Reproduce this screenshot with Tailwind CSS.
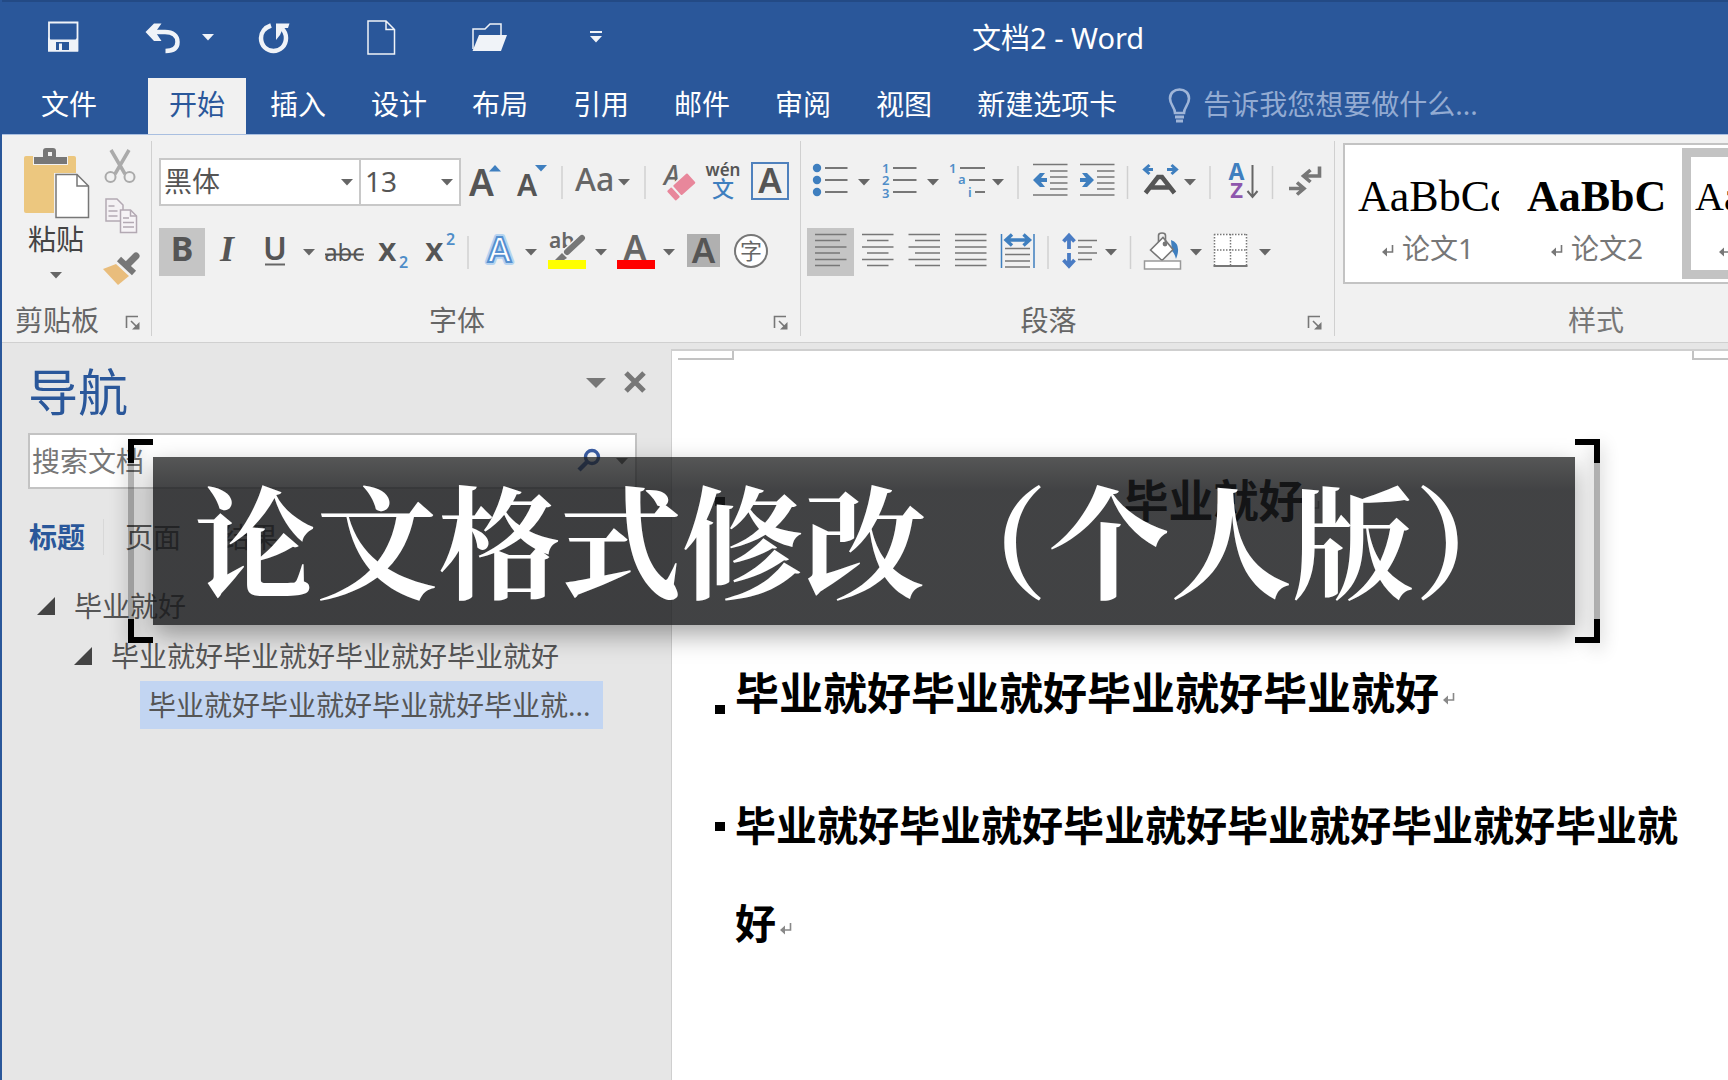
<!DOCTYPE html>
<html lang="zh-CN">
<head>
<meta charset="utf-8">
<meta name="viewport" content="width=device-width, initial-scale=1">
<title>文档2 - Word</title>
<script src="https://cdn.jsdelivr.net/npm/@tailwindcss/browser@4"></script>
</head>
<body class="font-['Noto_Sans','Noto_Sans_CJK_SC',sans-serif] text-[28px] leading-9 text-[#555] bg-[#e6e6e6] [&_svg]:overflow-visible">
<svg width="0" height="0" class="absolute" aria-hidden="true">
  <defs>
    <symbol id="caret" viewBox="0 0 12 7"><path d="M0 0h12L6 6.5z" fill="#666"/></symbol>
    <symbol id="launcher" viewBox="0 0 16 16"><path d="M1.5 13V1.5H13M6 6l7 7" fill="none" stroke="#777" stroke-width="1.6"/><path d="M14.5 7v7.500H7z" fill="#777"/></symbol>
    <symbol id="ret" viewBox="0 0 12 16"><path d="M10.500 3v7H3" fill="none" stroke="currentColor" stroke-width="1.600"/><path d="M0 10l5-4.500v9z" fill="currentColor"/></symbol>
  </defs>
</svg>
<div class="relative flex min-h-screen w-full flex-col overflow-hidden border-l-2 border-[#2a579a]">

  <!-- Title bar -->
  <header class="bg-[#2a579a] text-white">
    <div class="relative flex h-[78px] items-stretch border-t-2 border-[#234a85]">
      <button aria-label="保存" class="flex-none"><svg width="118" height="76" viewBox="2 2 118 76"><path d="M49 22.500h28.500v28H49z" fill="none" stroke="#f0f3f8" stroke-width="1.800"/><path d="M48 37l2.500 2.500h25L78 37v14.500H48z" fill="#f0f3f8"/><path d="M56 42h13v8H56z" fill="#2a579a"/><path d="M59 43.500h3v6.500h-3z" fill="#f0f3f8"/></svg></button>
      <button aria-label="撤消" class="flex-none"><svg width="120" height="76" viewBox="120 2 120 76"><path d="M150 32h15c8 0 12.500 4 12.500 10 0 6-4.500 9-12 9" fill="none" stroke="#f0f3f8" stroke-width="4.500"/><path d="M145.500 32L154 23.500h7.500l-6 8.500 6 9H154z" fill="#f0f3f8"/><path d="M202 34h12l-6 6.500z" fill="#f0f3f8"/></svg></button>
      <button aria-label="重复" class="flex-none"><svg width="90" height="76" viewBox="240 2 90 76"><path d="M271 25.500c-6 2-10 7-10 12.500 0 8 6 13 12.500 13S286 46 286 38c0-4-1.500-7-4-9.500" fill="none" stroke="#f0f3f8" stroke-width="4.500"/><path d="M276 23.500h13.500l-1.500 4.500-5 0-3 7-4 5z" fill="#f0f3f8"/></svg></button>
      <button aria-label="新建" class="flex-none"><svg width="110" height="76" viewBox="330 2 110 76"><path d="M368 21h18l8.500 8.500V54H368zM386 21v8.500h8.500" fill="none" stroke="#f0f3f8" stroke-width="1.500"/></svg></button>
      <button aria-label="打开" class="flex-none"><svg width="110" height="76" viewBox="440 2 110 76"><path d="M473 49V29h12l5-5h11v11" fill="none" stroke="#f0f3f8" stroke-width="1.500"/><path d="M479 35h28l-6 16h-28.500z" fill="#f0f3f8"/></svg></button>
      <button aria-label="自定义快速访问工具栏" class="flex-none"><svg width="90" height="76" viewBox="550 2 90 76"><path d="M590 31h12v2h-12zM590 36h12l-6 6.500z" fill="#f0f3f8"/></svg></button>
      <h1 class="ml-[332px] self-center whitespace-nowrap pb-1 text-[29px]">文档2 - Word</h1>
    </div>
    <nav class="flex h-14 items-center gap-[3px] whitespace-nowrap" aria-label="功能区选项卡">
      <button class="mr-[27px] h-full w-[116px] pb-1 pl-[39px] text-left">文件</button>
      <button class="h-full bg-[#f1f1f1] px-[21px] pb-1 text-[#2a579a]">开始</button>
      <button class="h-full px-[21px] pb-1">插入</button>
      <button class="h-full px-[21px] pb-1">设计</button>
      <button class="h-full px-[21px] pb-1">布局</button>
      <button class="h-full px-[21px] pb-1">引用</button>
      <button class="h-full px-[21px] pb-1">邮件</button>
      <button class="h-full px-[21px] pb-1">审阅</button>
      <button class="h-full px-[21px] pb-1">视图</button>
      <button class="h-full px-[21px] pb-1">新建选项卡</button>
      <label class="flex h-full min-w-0 flex-1 items-center pl-[26px]">
        <svg class="flex-none" width="36" height="38" viewBox="0 0 36 38" fill="none" stroke="#9fb5d8" stroke-width="2.600"><path d="M8 26c0-6-5-8-5-14.500C3 6 7 2.500 12.500 2.500S22 6 22 11.500C22 18 17 20 17 26z"/><path d="M8 30h9M9 34h7" stroke-width="3"/></svg>
        <input aria-label="操作说明搜索" class="w-full bg-transparent pb-1 outline-none placeholder:text-[#93abd2]" placeholder="告诉我您想要做什么...">
      </label>
    </nav>
  </header>

  <!-- Ribbon -->
  <section class="flex h-[209px] flex-none border-y border-t-[#a9bfe0] border-b-[#d0d0d0] bg-[#f1f1f1]" aria-label="开始">
    <div class="flex w-[149px] flex-none flex-col">
      <div class="flex h-[167px]">
        <button class="flex w-24 flex-col items-center pl-3 pt-3 text-[#444]">
          <svg width="68" height="72" viewBox="24 147 68 72"><rect x="26" y="156" width="52" height="57" rx="2" fill="#ecc77f"/><path d="M35 155h35v10H35z" fill="#f1f1f1"/><path d="M36 164v-7h9v-6q0-3 3-3h7q3 0 3 3v6h11v7z" fill="#777"/><path d="M50 152h4v4h-4z" fill="#f1f1f1"/><path d="M56 173h24v46H56z" fill="#f1f1f1"/><path d="M58 174.500h21l11.500 11.500v31.500H58z" fill="#fff" stroke="#777" stroke-width="1.500"/><path d="M79 174.500V186h11.500" fill="none" stroke="#777" stroke-width="1.500"/></svg>
          <span class="pt-[2px]">粘贴</span>
          <svg class="mt-[15px] flex-none" width="12" height="7"><use href="#caret"/></svg>
        </button>
        <div class="flex flex-col pt-2">
          <button aria-label="剪切"><svg width="50" height="48" viewBox="98 142 50 48" fill="none" stroke="#aaa"><path d="M111 149l14 24M129 149l-14 24" stroke-width="3.500"/><circle cx="110.500" cy="176" r="5" stroke-width="2"/><circle cx="129.500" cy="176" r="5" stroke-width="2"/></svg></button>
          <button aria-label="复制"><svg width="50" height="50" viewBox="98 192 50 50" stroke="#b3a9b3" stroke-width="1.500"><path d="M106 200h11l6 6v16h-17z" fill="#f4f1f4"/><path d="M108.500 207h6M108.500 212h9M108.500 217h9" /><path d="M120.500 211h10l6 6v16.500h-16z" fill="#f6f3f6"/><path d="M130.500 211v6h6M123 219h6M123 223.500h11M123 228h11" fill="none"/></svg></button>
          <button aria-label="格式刷"><svg width="50" height="50" viewBox="98 240 50 50"><path d="M103 268l13-5 13 12-11 9z" fill="#e9bd7c"/><path d="M119 258l15 14" stroke="#777" stroke-width="6"/><path d="M127 264l9-9" stroke="#777" stroke-width="7" stroke-linecap="round"/><path d="M114 260l17 16" stroke="#f1f1f1" stroke-width="1"/></svg></button>
        </div>
      </div>
      <div class="flex items-center pl-[13px] text-[#666]"><span class="flex-1">剪贴板</span><button aria-label="剪贴板选项" class="pr-[10px] pt-[6px]"><svg width="16" height="16"><use href="#launcher"/></svg></button></div>
    </div>

    <div class="my-[6px] w-px flex-none bg-[#d0d0d0]"></div>

    <div class="flex w-[648px] flex-none flex-col pt-[23px]">
      <div class="flex h-12 pl-[7px]">
        <div class="relative h-12 w-[202px] flex-none">
          <select aria-label="字体" class="h-12 w-full appearance-none border-2 border-[#c8c8c8] bg-white pb-[2px] pl-[3px] text-[#555]"><option>黑体</option></select>
          <svg class="pointer-events-none absolute right-2 top-[21px]" width="12" height="7"><use href="#caret"/></svg>
        </div>
        <div class="relative h-12 w-[100px] flex-none">
          <select aria-label="字号" class="h-12 w-full appearance-none border-2 border-l-0 border-[#c8c8c8] bg-white pb-[2px] pl-[4px] text-[#555]"><option>13</option></select>
          <svg class="pointer-events-none absolute right-2 top-[21px]" width="12" height="7"><use href="#caret"/></svg>
        </div>
        <button aria-label="增大字号"><svg width="47" height="48" viewBox="461 158 47 48"><text x="469" y="196" font-size="37" font-weight="600" fill="#555">A</text><path d="M489 171.500h12l-6-6.500z" fill="#3f7fbf"/></svg></button>
        <button aria-label="减小字号"><svg width="48" height="48" viewBox="508 158 48 48"><text x="517" y="196" font-size="30" font-weight="600" fill="#555">A</text><path d="M535 165h12l-6 6.500z" fill="#3f7fbf"/></svg></button>
        <button aria-label="更改大小写"><svg width="82" height="48" viewBox="556 158 82 48"><path d="M562 166v33" stroke="#d0d0d0" stroke-width="1.500"/><text x="575" y="191" font-size="32" font-weight="500" fill="#666">Aa</text><use href="#caret" x="618" y="179" width="12" height="7"/></svg></button>
        <button aria-label="清除所有格式"><svg width="65" height="48" viewBox="638 158 65 48"><path d="M645 166v33" stroke="#d0d0d0" stroke-width="1.500"/><text x="664" y="185" font-size="27" font-weight="500" font-style="italic" fill="#666">A</text><path d="M670 189l17-16" stroke="#f1f1f1" stroke-width="4"/><g transform="rotate(-42 682 187)"><rect x="676" y="180" width="19" height="13" rx="1" fill="#e8879b"/><rect x="668" y="180" width="6" height="13" rx="1" fill="#e8879b"/></g></svg></button>
        <button aria-label="拼音指南"><svg width="43" height="48" viewBox="703 158 43 48"><text x="723" y="176" text-anchor="middle" font-size="17" font-weight="600" fill="#555">wén</text><text x="723" y="197" text-anchor="middle" font-size="22" font-weight="500" fill="#3f7fbf">文</text></svg></button>
        <button aria-label="字符边框"><svg width="50" height="48" viewBox="746 158 50 48"><rect x="752" y="163" width="36" height="36" fill="none" stroke="#4f81bd" stroke-width="2"/><text x="770" y="193" text-anchor="middle" font-size="35" font-weight="600" fill="#555">A</text></svg></button>
      </div>
      <div class="mt-[22px] flex h-12 pl-[7px]">
        <button aria-label="加粗" class="bg-[#c5c5c5]"><svg width="46" height="48" viewBox="159 228 46 48"><text x="182" y="261" text-anchor="middle" font-size="34" font-weight="700" fill="#555">B</text></svg></button>
        <button aria-label="倾斜"><svg width="45" height="48" viewBox="205 228 45 48"><text x="227" y="261" text-anchor="middle" font-size="36" font-weight="700" font-style="italic" font-family="Liberation Serif" fill="#555">I</text></svg></button>
        <button aria-label="下划线"><svg width="70" height="48" viewBox="250 228 70 48"><text x="275" y="260" text-anchor="middle" font-size="32" font-weight="600" fill="#555">U</text><path d="M265 264.500h20" stroke="#666" stroke-width="2"/><use href="#caret" x="303" y="249" width="12" height="7"/></svg></button>
        <button aria-label="删除线"><svg width="50" height="48" viewBox="320 228 50 48"><text x="344" y="261" text-anchor="middle" font-size="24" fill="#555">abc</text><path d="M325 254.500h39" stroke="#555" stroke-width="1.800"/></svg></button>
        <button aria-label="下标"><svg width="48" height="48" viewBox="370 228 48 48"><text x="378" y="261" font-size="33" font-weight="600" fill="#555">x</text><text x="399" y="268" font-size="16" font-weight="600" fill="#4f8dc8">2</text></svg></button>
        <button aria-label="上标"><svg width="45" height="48" viewBox="418 228 45 48"><text x="425" y="261" font-size="33" font-weight="600" fill="#555">x</text><text x="446" y="245" font-size="16" font-weight="600" fill="#4f8dc8">2</text></svg></button>
        <button aria-label="文本效果"><svg width="79" height="48" viewBox="463 228 79 48"><path d="M468 236v33" stroke="#d0d0d0" stroke-width="1.500"/><text x="499.500" y="262" text-anchor="middle" font-size="35" font-weight="600" fill="#4f8fd0" stroke="#b5d3f0" stroke-width="6" stroke-linejoin="round">A</text><text x="499.500" y="262" text-anchor="middle" font-size="35" font-weight="600" fill="#fff" stroke="#5590d0" stroke-width="2">A</text><use href="#caret" x="525" y="249" width="12" height="7"/></svg></button>
        <button aria-label="突出显示"><svg width="69" height="48" viewBox="542 228 69 48"><text x="549" y="248" font-size="21" font-weight="600" fill="#666">ab</text><path d="M566 253l17-16" stroke="#f1f1f1" stroke-width="9"/><path d="M567 252l15-14" stroke="#777" stroke-width="6" stroke-linecap="round"/><path d="M555 260l7-7 5 5-3 2z" fill="#777"/><path d="M548 260h38v9h-38z" fill="#ff0"/><use href="#caret" x="595" y="249" width="12" height="7"/></svg></button>
        <button aria-label="字体颜色"><svg width="69" height="48" viewBox="611 228 69 48"><text x="635" y="260" text-anchor="middle" font-size="34" font-weight="600" fill="#666">A</text><path d="M617 260h38v9h-38z" fill="#f00"/><use href="#caret" x="663" y="249" width="12" height="7"/></svg></button>
        <button aria-label="字符底纹"><svg width="47" height="48" viewBox="680 228 47 48"><path d="M687 234h33v33h-33z" fill="#b0b0b0"/><text x="703.500" y="263" text-anchor="middle" font-size="35" font-weight="600" fill="#555">A</text></svg></button>
        <button aria-label="带圈字符"><svg width="47" height="48" viewBox="727 228 47 48"><circle cx="751" cy="251" r="16" fill="#fff" stroke="#777" stroke-width="2"/><text x="751" y="259" text-anchor="middle" font-size="22" fill="#666">字</text></svg></button>
      </div>
      <div class="mt-[26px] flex items-center text-[#666]"><span class="flex-1 text-center">字体</span><button aria-label="字体选项" class="w-[38px] pt-[6px]"><svg class="ml-[11px]" width="16" height="16"><use href="#launcher"/></svg></button></div>
    </div>

    <div class="my-[6px] w-px flex-none bg-[#d0d0d0]"></div>

    <div class="flex w-[533px] flex-none flex-col pt-[23px]">
      <div class="flex h-12 pl-[6px]">
        <button aria-label="项目符号"><svg width="68" height="48" viewBox="807 158 68 48"><g fill="#3f7fbf"><circle cx="817" cy="168" r="4.200"/><circle cx="817" cy="180" r="4.200"/><circle cx="817" cy="192" r="4.200"/></g><path d="M825 168h22.500M825 180h22.500M825 192h22.500" stroke="#777" stroke-width="1.800"/><use href="#caret" x="858" y="179" width="12" height="7"/></svg></button>
        <button aria-label="编号"><svg width="69" height="48" viewBox="875 158 69 48"><g fill="#4f8dc8" font-size="13" font-weight="600"><text x="882" y="173">1</text><text x="882" y="185">2</text><text x="882" y="198">3</text></g><path d="M893 168h23.500M893 180h23.500M893 192h23.500" stroke="#777" stroke-width="1.800"/><use href="#caret" x="927" y="179" width="12" height="7"/></svg></button>
        <button aria-label="多级列表"><svg width="68" height="48" viewBox="944 158 68 48"><g fill="#4f8dc8" font-size="13" font-weight="600"><text x="949" y="173">1</text><text x="958" y="184">a</text><text x="968" y="197">i</text></g><path d="M960 168h25M969 180h16M975 192h10" stroke="#777" stroke-width="1.800"/><use href="#caret" x="992" y="179" width="12" height="7"/></svg></button>
        <button aria-label="减少缩进量"><svg width="61" height="48" viewBox="1012 158 61 48"><path d="M1018 166v33" stroke="#d0d0d0" stroke-width="1.500"/><path d="M1033 164.500h34.500M1050 171h17.500M1050 177h17.500M1050 183h17.500M1050 189h17.500M1033 195h34.500" stroke="#777" stroke-width="1.600"/><path d="M1033 180l7-7h5l-4 5h6v4h-6l4 5h-5z" fill="#3f7fbf"/></svg></button>
        <button aria-label="增加缩进量"><svg width="48" height="48" viewBox="1073 158 48 48"><path d="M1080 164.500h34.500M1097 171h17.500M1097 177h17.500M1097 183h17.500M1097 189h17.500M1080 195h34.500" stroke="#777" stroke-width="1.600"/><path d="M1094 180l-7-7h-5l4 5h-6v4h6l-4 5h5z" fill="#3f7fbf"/></svg></button>
        <button aria-label="中文版式"><svg width="82" height="48" viewBox="1121 158 82 48"><path d="M1127.500 166v33" stroke="#d0d0d0" stroke-width="1.500"/><path d="M1145.500 193l12.500-16h4l12.500 16M1151 187.500h19" fill="none" stroke="#555" stroke-width="4.500"/><g fill="none" stroke="#3f7fbf" stroke-width="3"><path d="M1153 169.500h-9M1149.500 165l-5 4.500 5 4.500M1167 169.500h9M1171.500 165l5 4.500-5 4.500"/></g><use href="#caret" x="1184" y="179" width="12" height="7"/></svg></button>
        <button aria-label="排序"><svg width="63" height="48" viewBox="1203 158 63 48"><path d="M1210 166v33" stroke="#d0d0d0" stroke-width="1.500"/><text x="1236.500" y="180" text-anchor="middle" font-size="23" font-weight="700" fill="#3f7fbf">A</text><text x="1236.500" y="198" text-anchor="middle" font-size="22" font-weight="700" fill="#8e57ad">Z</text><path d="M1252.500 165v32M1247.500 191l5 6 5-6" fill="none" stroke="#666" stroke-width="2"/></svg></button>
        <button aria-label="显示编辑标记"><svg width="62" height="48" viewBox="1266 158 62 48"><path d="M1272.500 166v33" stroke="#d0d0d0" stroke-width="1.500"/><path d="M1319.500 166.500v9.500h-15M1310.500 170l-7 6 7 6M1289 188.500h14M1297 182.500l7 6-7 6" fill="none" stroke="#777" stroke-width="3.600"/></svg></button>
      </div>
      <div class="mt-[22px] flex h-12 pl-[6px]">
        <button aria-label="左对齐" class="bg-[#c5c5c5]"><svg width="47" height="48" viewBox="807 228 47 48"><path d="M815 234.500h31.500M815 240.500h25M815 247h31.500M815 253h25M815 259.500h31.500M815 265.500h25" stroke="#777" stroke-width="1.700"/></svg></button>
        <button aria-label="居中"><svg width="47" height="48" viewBox="854 228 47 48"><path d="M862 234.500h31.500M867 240.500h21.500M862 247h31.500M867 253h21.500M862 259.500h31.500M867 265.500h21.500" stroke="#777" stroke-width="1.700"/></svg></button>
        <button aria-label="右对齐"><svg width="47" height="48" viewBox="901 228 47 48"><path d="M908.500 234.500H940M915 240.500h25M908.500 247H940M915 253h25M908.500 259.500H940M915 265.500h25" stroke="#777" stroke-width="1.700"/></svg></button>
        <button aria-label="两端对齐"><svg width="46" height="48" viewBox="948 228 46 48"><path d="M955 234.500h31.500M955 240.500h31.500M955 247h31.500M955 253h31.500M955 259.500h31.500M955 265.500h31.500" stroke="#777" stroke-width="1.700"/></svg></button>
        <button aria-label="分散对齐"><svg width="48" height="48" viewBox="994 228 48 48"><path d="M1005 248.500h25M1005 254.500h25M1005 261h25M1005 267h25" stroke="#777" stroke-width="1.700"/><path d="M1001.500 234v34M1034 234v34" stroke="#3f7fbf" stroke-width="1.500"/><path d="M1006 240h23M1012 234.500l-6 5.500 6 5.500M1023.500 234.500l6 5.500-6 5.500" fill="none" stroke="#3f7fbf" stroke-width="3.400"/></svg></button>
        <button aria-label="行和段落间距"><svg width="82" height="48" viewBox="1042 228 82 48"><path d="M1048 236v33" stroke="#d0d0d0" stroke-width="1.500"/><path d="M1078 240.500h19M1078 247h14M1078 253h19M1078 259.500h14" stroke="#777" stroke-width="1.700"/><path d="M1069 249v-13M1063.500 241.500l5.500-6 5.500 6M1069 253v13M1063.500 260l5.500 6 5.500-6" fill="none" stroke="#4a7cc4" stroke-width="3.800"/><use href="#caret" x="1105" y="249" width="12" height="7"/></svg></button>
        <button aria-label="底纹"><svg width="83" height="48" viewBox="1124 228 83 48"><path d="M1130.500 236v33" stroke="#d0d0d0" stroke-width="1.500"/><path d="M1171 240q11 4 5 19-1.500-6-4-8z" fill="#3f7fbf"/><path d="M1150.500 250L1163 237.500l10 12-11 11z" fill="#fff" stroke="#777" stroke-width="1.600"/><path d="M1158.500 242v-6.500q0-2.500 3.500-2.500t3.500 2.500v9" fill="none" stroke="#777" stroke-width="1.600"/><circle cx="1165" cy="244" r="2.400" fill="#777"/><rect x="1144.500" y="261" width="36" height="8" fill="#fff" stroke="#999" stroke-width="1.500"/><use href="#caret" x="1190" y="249" width="12" height="7"/></svg></button>
        <button aria-label="边框"><svg width="72" height="48" viewBox="1207 228 72 48"><path d="M1214 234h33v32h-33z" fill="#fff"/><path d="M1214 234.500h33M1214 250h33M1214.500 234v32M1230.500 234v32M1246.500 234v32" stroke="#777" stroke-width="1.500" stroke-dasharray="1.500 1.500"/><path d="M1213.500 266h34" stroke="#777" stroke-width="1.800"/><use href="#caret" x="1259" y="249" width="12" height="7"/></svg></button>
      </div>
      <div class="mt-[26px] flex items-center text-[#666]"><span class="flex-1 text-center">段落</span><button aria-label="段落选项" class="w-[38px] pt-[6px]"><svg class="ml-[11px]" width="16" height="16"><use href="#launcher"/></svg></button></div>
    </div>

    <div class="my-[6px] w-px flex-none bg-[#d0d0d0]"></div>

    <div class="flex w-[522px] flex-none flex-col pl-2 pt-2">
      <div class="flex h-[141px] border-2 border-[#c3c3c3] bg-white pt-[3px] text-[#777]">
        <button class="flex h-[131px] w-[169px] flex-none flex-col pl-[13px] pt-[24px] text-left">
          <span class="block w-[141px] overflow-hidden font-['Liberation_Serif',serif] text-[44px] leading-[50px] text-black">AaBbCc</span>
          <span class="flex items-center gap-2 pl-6 pt-2"><svg class="mt-1 flex-none" width="12" height="16"><use href="#ret"/></svg>论文1</span>
        </button>
        <button class="flex h-[131px] w-[168px] flex-none flex-col pl-[13px] pt-[24px] text-left">
          <span class="block w-[141px] overflow-hidden font-['Liberation_Serif',serif] text-[44px] font-bold leading-[50px] text-black">AaBbC</span>
          <span class="flex items-center gap-2 pl-6 pt-2"><svg class="mt-1 flex-none" width="12" height="16"><use href="#ret"/></svg>论文2</span>
        </button>
        <button class="flex h-[131px] w-[168px] flex-none flex-col border-[9px] border-[#c3c3c3] pl-[4px] pt-[15px] text-left">
          <span class="block w-[136px] overflow-hidden font-['Liberation_Serif',serif] text-[40px] leading-[50px] text-black">AaBbC</span>
          <span class="flex items-center gap-2 pl-6 pt-2"><svg class="mt-1 flex-none" width="12" height="16"><use href="#ret"/></svg>论文3</span>
        </button>
      </div>
      <div class="mt-[18px] pr-2 text-center text-[#777]">样式</div>
    </div>
  </section>

  <main class="flex flex-1">
    <!-- Navigation pane -->
    <aside class="flex w-[669px] flex-none flex-col pt-[19px]" aria-label="导航">
      <div class="flex items-start justify-between pl-[26px] pr-6">
        <h2 class="text-[50px] leading-[60px] text-[#2a579a]">导航</h2>
        <div class="flex items-center gap-4 pt-2">
          <button aria-label="窗格选项"><svg width="22" height="24"><path d="M1 8h20L11 18z" fill="#777"/></svg></button>
          <button aria-label="关闭"><svg width="24" height="24"><path d="M3 3l18 18M21 3L3 21" stroke="#777" stroke-width="5"/></svg></button>
        </div>
      </div>
      <label class="ml-[26px] mr-[34px] mt-[11px] flex h-14 items-center border-2 border-[#c3c3c3] bg-white pl-[2px]">
        <input aria-label="搜索文档" class="min-w-0 flex-1 bg-transparent outline-none placeholder:text-[#777]" placeholder="搜索文档">
        <svg class="flex-none" width="60" height="32" viewBox="578 444 60 32"><circle cx="595" cy="456" r="6.500" fill="none" stroke="#3b5ea5" stroke-width="3.400"/><path d="M590 461l-8 8" stroke="#3b5ea5" stroke-width="4.500"/><path d="M619 457h12l-6 6.500z" fill="#666"/></svg>
      </label>
      <div class="mt-[30px] flex pl-[27px]">
        <button class="w-[75px] border-r border-[#d8d8d8] text-left font-bold text-[#2a579a]">标题</button>
        <button class="w-[97px] pl-[21px] text-left">页面</button>
        <button class="pl-[21px]">结果</button>
      </div>
      <ul class="mt-[26px] leading-[50px]">
        <li class="flex items-center pl-[35px]"><svg class="mr-[19px] flex-none" width="18" height="18"><path d="M18 0v18H0z" fill="#444"/></svg>毕业就好</li>
        <li class="flex items-center pl-[72px]"><svg class="mr-[19px] flex-none" width="18" height="18"><path d="M18 0v18H0z" fill="#444"/></svg>毕业就好毕业就好毕业就好毕业就好</li>
        <li class="ml-[138px] mr-[68px] whitespace-nowrap bg-[#c2d5f2] pl-2 leading-[48px]">毕业就好毕业就好毕业就好毕业就...</li>
      </ul>
    </aside>

    <!-- Document page -->
    <article class="mt-[6px] min-w-0 flex-1 border-l border-t-2 border-[#cfcfcf] bg-white text-black">
      <div class="flex justify-between pl-[6px]" aria-hidden="true">
        <div class="h-[9px] w-14 border-b-2 border-r-2 border-[#c3c3c3]"></div>
        <div class="h-[9px] w-9 border-b-2 border-l-2 border-[#c3c3c3]"></div>
      </div>
      <div class="pl-[43px] pr-[46px]">
        <h3 class="mt-[109px] flex items-center text-[45px] font-bold leading-[64px]"><span class="h-[9px] w-[10px] bg-black"></span><span class="flex-1 pl-9 text-center">毕业就好<svg class="ml-1 inline text-[#999]" width="12" height="16"><use href="#ret"/></svg></span></h3>
        <div class="mt-[128px] flex"><span class="mt-[44px] h-[9px] w-[10px] flex-none bg-black"></span>
          <h4 class="pl-[10px] text-[44px] font-bold leading-[64px]">毕业就好毕业就好毕业就好毕业就好<svg class="ml-1 inline text-[#888]" width="12" height="16"><use href="#ret"/></svg></h4></div>
        <div class="mt-[51px] flex"><span class="mt-[46px] h-[9px] w-[10px] flex-none bg-black"></span>
          <h5 class="pl-[10px] text-[41px] font-bold leading-[98px]">毕业就好毕业就好毕业就好毕业就好毕业就好毕业就好<svg class="ml-1 inline text-[#888]" width="12" height="16"><use href="#ret"/></svg></h5></div>
      </div>
    </article>
  </main>

  <!-- Caption laid over the window -->
  <div class="absolute left-[126px] right-32 top-[439px] h-[204px] px-[25px] py-[18px]">
    <div class="absolute inset-y-0 left-0 w-[6px] bg-black/30 shadow-[0_6px_18px_rgba(0,0,0,0.3)]"></div>
    <div class="absolute inset-y-0 right-0 w-[6px] bg-black/30 shadow-[0_6px_18px_rgba(0,0,0,0.3)]"></div>
    <div class="absolute left-0 top-0 h-6 w-[25px] border-l-[6px] border-t-[6px] border-black"></div>
    <div class="absolute bottom-0 left-0 h-6 w-[25px] border-b-[6px] border-l-[6px] border-black"></div>
    <div class="absolute right-0 top-0 h-6 w-[25px] border-r-[6px] border-t-[6px] border-black"></div>
    <div class="absolute bottom-0 right-0 h-6 w-[25px] border-b-[6px] border-r-[6px] border-black"></div>
    <p class="flex h-full items-center overflow-hidden whitespace-nowrap bg-linear-to-b from-[#1d1e1e]/75 to-[#18191b]/82 to-20% pb-2 pl-[41px] font-['Noto_Serif_CJK_SC','Noto_Sans_CJK_SC',serif] text-[122px] font-bold leading-[160px] text-white shadow-[0_10px_24px_rgba(0,0,0,0.35)]">论文格式修改（个人版）</p>
  </div>
</div>
</body>
</html>
